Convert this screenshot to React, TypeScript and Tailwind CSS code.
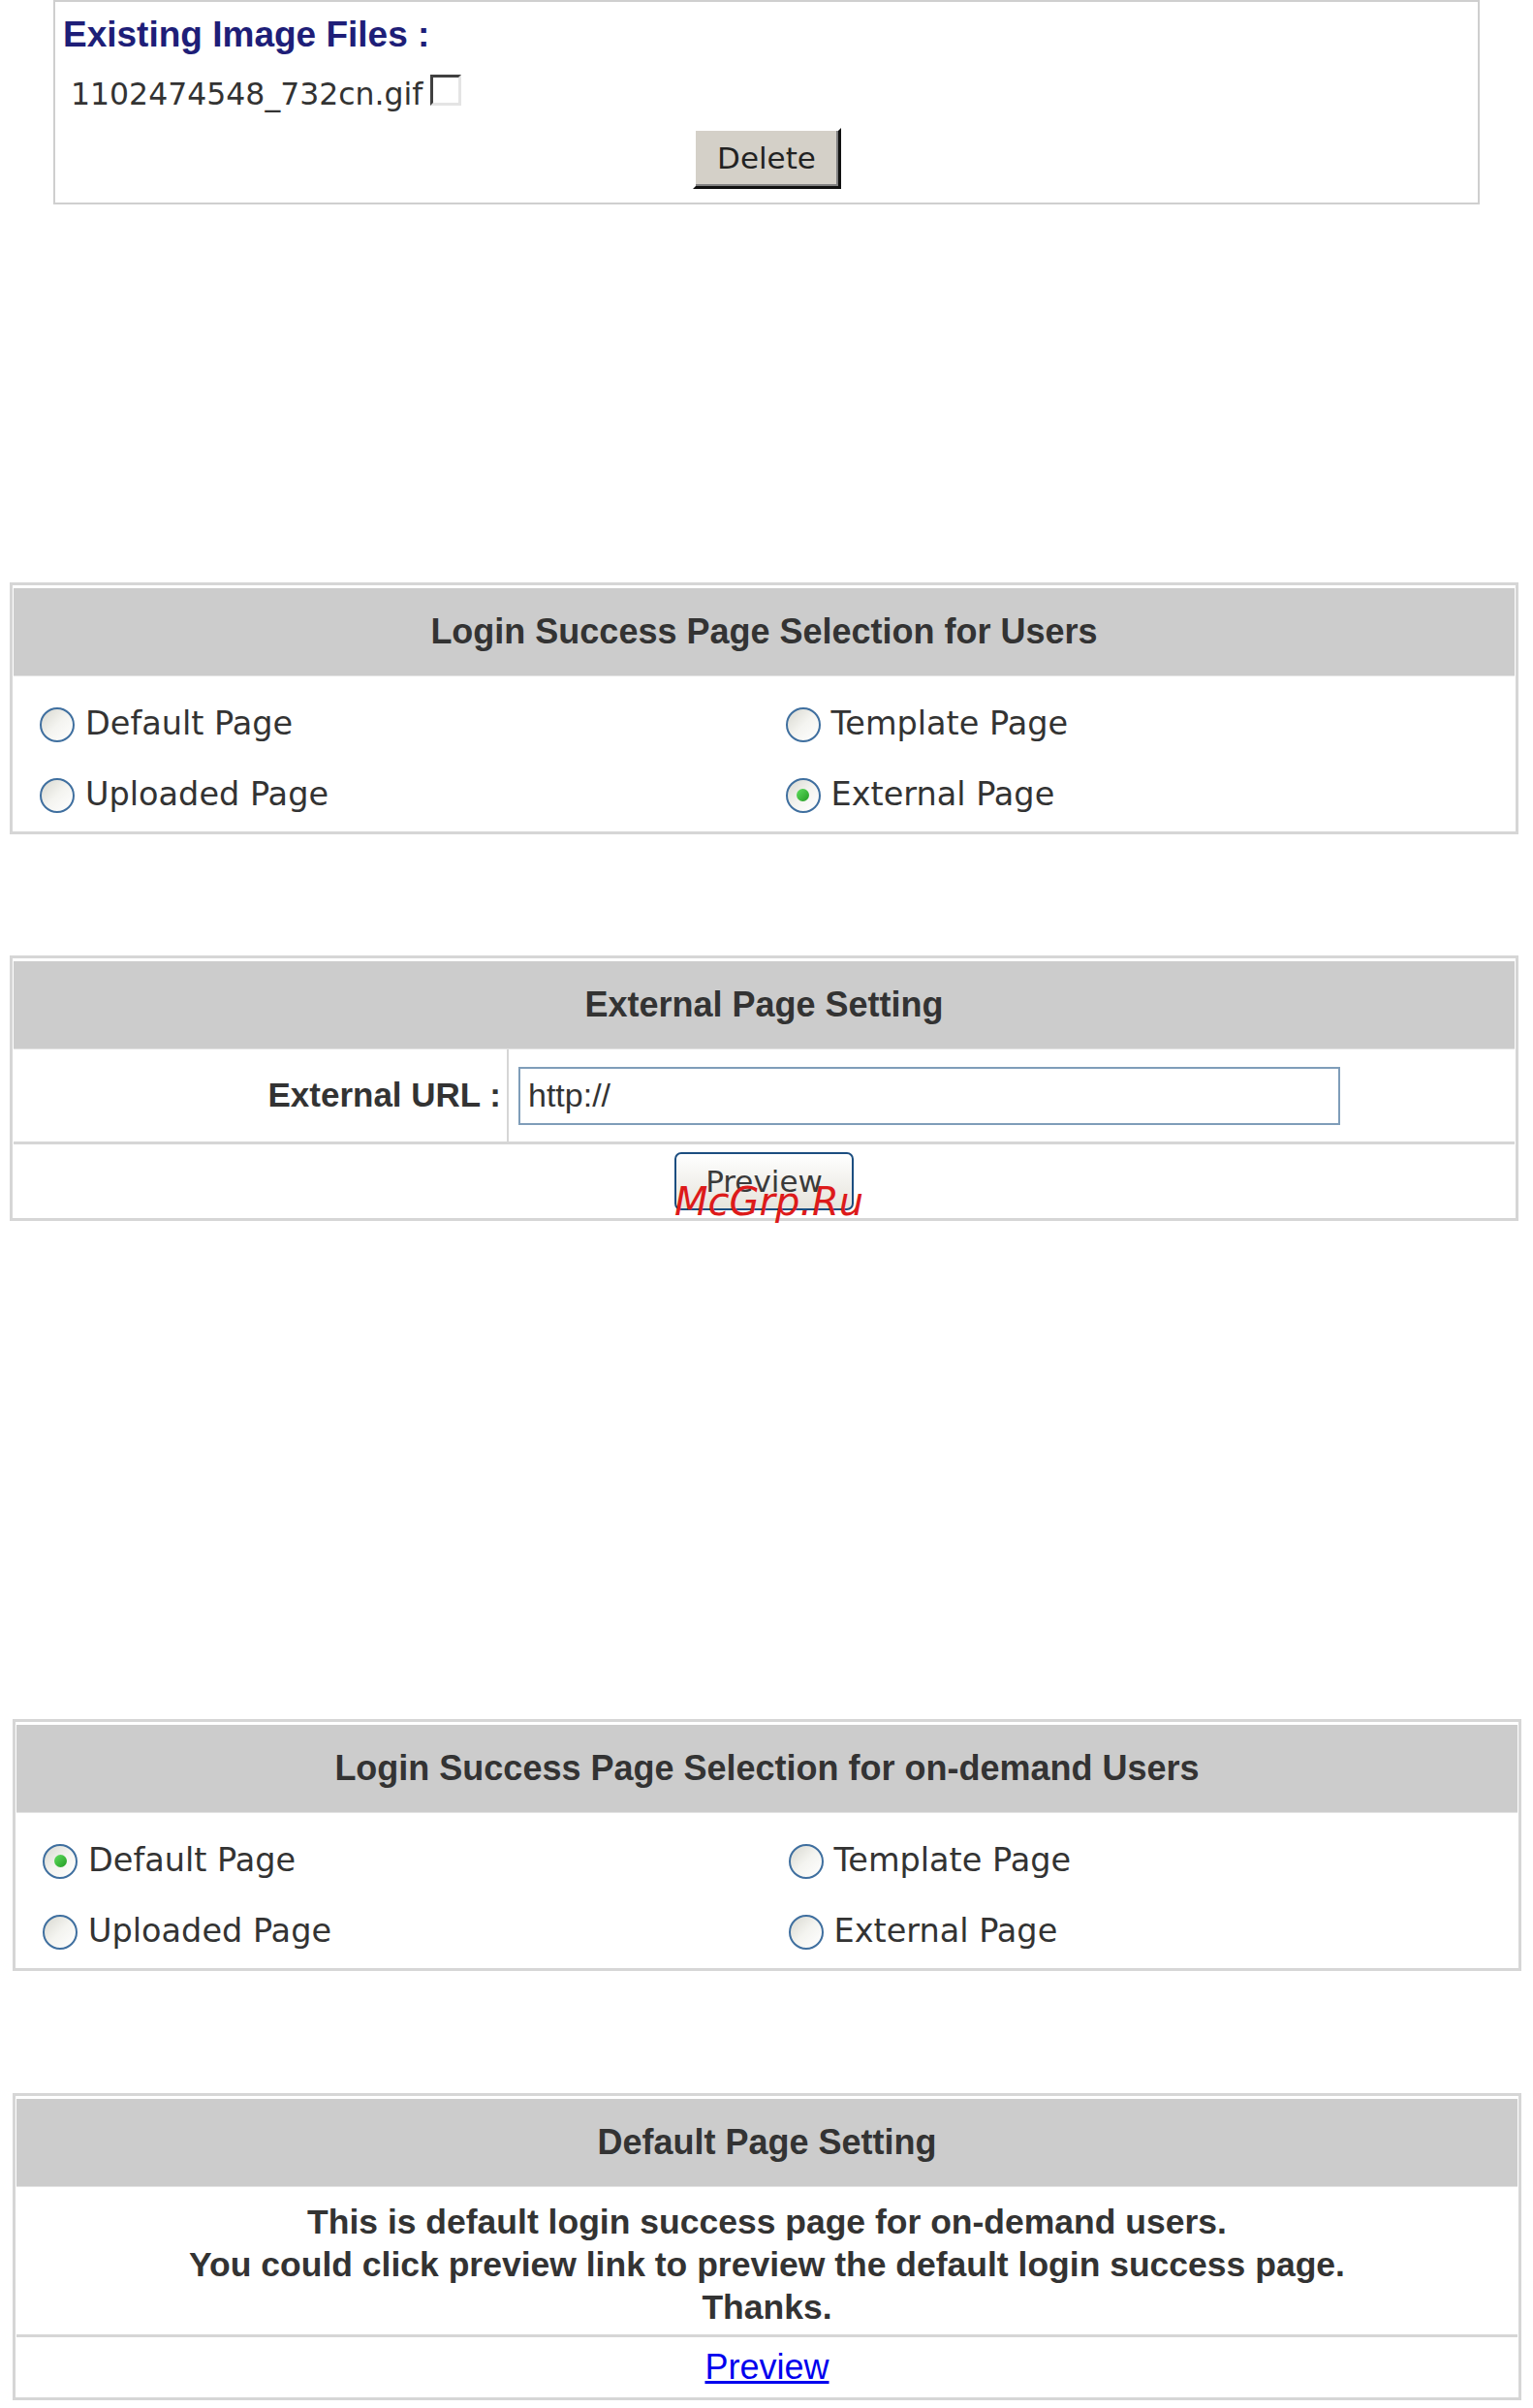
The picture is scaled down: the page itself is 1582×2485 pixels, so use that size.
import React from 'react';

const bold = { fontFamily: '"Liberation Sans", Arial, sans-serif' };
const plain = { fontFamily: '"DejaVu Sans", Verdana, sans-serif' };

const Radio = ({ checked }: { checked?: boolean }) => (
  <span className="inline-flex h-[36px] w-[36px] shrink-0 items-center justify-center rounded-full border-2 border-[#3f6f9f] bg-gradient-to-br from-[#d8d8d0] via-[#f4f4f0] to-white">
    {checked && (
      <span className="h-[13px] w-[13px] rounded-full bg-gradient-to-br from-[#5fe05f] to-[#1f9a1f]" />
    )}
  </span>
);

const RadioLabel = ({ label, checked }: { label: string; checked?: boolean }) => (
  <div className="flex h-[73px] items-center gap-[11px]">
    <Radio checked={checked} />
    <span className="text-[33.5px] text-[#333333]" style={plain}>
      {label}
    </span>
  </div>
);

const Header = ({ title }: { title: string }) => (
  <div
    className="flex h-[91px] items-center justify-center border-b border-[#e2e2e2] bg-[#cccccc] text-[36px] font-bold text-[#333333]"
    style={bold}
  >
    {title}
  </div>
);

const Panel = ({ children, className = '' }: { children: React.ReactNode; className?: string }) => (
  <div className={`w-[1557px] border-[3px] border-[#d6d6d6] bg-white px-[1px] pt-[3px] ${className}`}>
    {children}
  </div>
);

const PageSelection = ({ title, selected }: { title: string; selected: string }) => (
  <>
    <Header title={title} />
    <div className="grid grid-cols-2 pt-[13px] pb-[1px]">
      <div className="pl-[27px]">
        <RadioLabel label="Default Page" checked={selected === 'default'} />
        <RadioLabel label="Uploaded Page" checked={selected === 'uploaded'} />
      </div>
      <div className="pl-[22px]">
        <RadioLabel label="Template Page" checked={selected === 'template'} />
        <RadioLabel label="External Page" checked={selected === 'external'} />
      </div>
    </div>
  </>
);

export default function App() {
  return (
    <div className="min-h-[2485px] w-[1582px] bg-white pb-[9px]">
      {/* Existing image files */}
      <div className="ml-[55px] h-[211px] w-[1472px] border-2 border-[#cfcfcf] bg-white">
        <div className="pl-[8px] pt-[12px] text-[37px] font-bold leading-[44px] text-[#1e1e78]" style={bold}>
          Existing Image Files :
        </div>
        <div className="mt-[18px] flex h-[44px] items-center pl-[16px]">
          <span className="text-[31.5px] text-[#333333]" style={plain}>
            1102474548_732cn.gif
          </span>
          <span className="ml-[8px] mb-[10px] h-[32px] w-[32px] border-[3px] border-t-[#404040] border-l-[#404040] border-r-[#e4e4e4] border-b-[#e4e4e4] bg-white" />
        </div>
        <div className="mt-[12px] flex justify-center">
          <button
            className="h-[63px] w-[153px] border-[3px] border-t-white border-l-white border-r-[#111111] border-b-[#111111] bg-[#d4d0c8] text-[31px] text-[#222222] shadow-[inset_-2px_-2px_0_#808080]"
            style={plain}
          >
            Delete
          </button>
        </div>
      </div>

      <Panel className="ml-[10px] mt-[390px]">
        <PageSelection title="Login Success Page Selection for Users" selected="external" />
      </Panel>

      {/* External page setting */}
      <Panel className="ml-[10px] mt-[125px]">
        <Header title="External Page Setting" />
        <div className="flex h-[95px]">
          <div
            className="flex w-[511px] items-center justify-end border-r-2 border-[#d6d6d6] pr-[6px] text-[35px] font-bold text-[#333333]"
            style={bold}
          >
            External URL :
          </div>
          <div className="flex items-center pl-[10px]">
            <div
              className="flex h-[60px] w-[848px] items-center border-2 border-[#7f9db9] bg-white pl-[8px] text-[34px] text-[#333333]"
              style={bold}
            >
              http://
            </div>
          </div>
        </div>
        <div className="flex h-[79px] items-center justify-center border-t-[3px] border-[#d6d6d6]">
          <div className="relative">
            <button
              className="h-[60px] w-[185px] rounded-[7px] border-2 border-[#1c4e80] bg-gradient-to-b from-white to-[#e6e4dc] text-[31px] text-[#3a3a3a]"
              style={plain}
            >
              Preview
            </button>
            <span
              className="absolute left-[0px] top-[27px] whitespace-nowrap text-[40px] italic leading-[48px] text-[#dd1a1a]"
              style={plain}
            >
              McGrp.Ru
            </span>
          </div>
        </div>
      </Panel>

      <Panel className="ml-[13px] mt-[514px]">
        <PageSelection title="Login Success Page Selection for on-demand Users" selected="default" />
      </Panel>

      {/* Default page setting */}
      <Panel className="ml-[13px] mt-[126px]">
        <Header title="Default Page Setting" />
        <div
          className="pt-[14px] pb-[6px] text-center text-[35.5px] font-bold leading-[44px] text-[#333333]"
          style={bold}
        >
          <div>This is default login success page for on-demand users.</div>
          <div>You could click preview link to preview the default login success page.</div>
          <div>Thanks.</div>
        </div>
        <div className="flex h-[65px] items-center justify-center border-t-[3px] border-[#d6d6d6]">
          <a href="#" className="text-[36px] text-[#0000ee] underline" style={bold}>
            Preview
          </a>
        </div>
      </Panel>
    </div>
  );
}
